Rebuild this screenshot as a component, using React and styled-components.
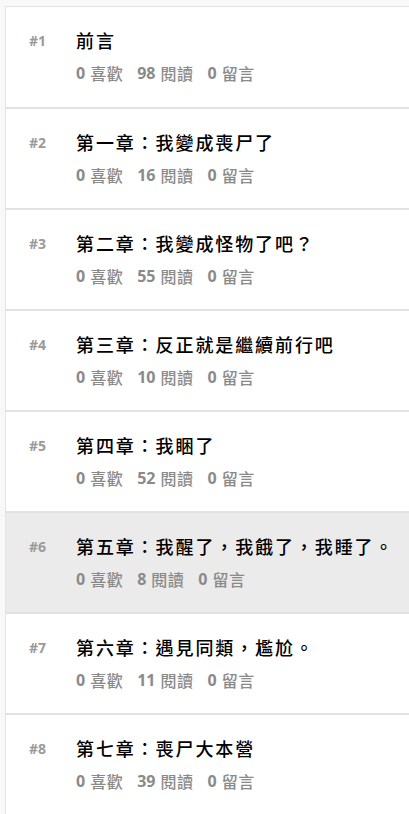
import React from 'react';
import styled, { createGlobalStyle } from 'styled-components';

const GlobalStyle = createGlobalStyle`
  html, body {
    margin: 0;
    padding: 0;
    background: #f8f8f9;
    font-family: "Open Sans", "Noto Sans CJK TC", sans-serif;
    overflow: hidden;
  }
`;

const ChapterList = styled.ul`
  list-style: none;
  margin: 6px 0 0 5px;
  padding: 0;
  background: #fff;
  border-top: 1px solid #e4e4e6;
  border-left: 1px solid #e4e4e6;
`;

const ChapterRow = styled.li`
  display: flex;
  align-items: flex-start;
  height: 99px;
  padding: 0;
  border-bottom: 2px solid #e2e2e2;
  background: ${(props) => (props.active ? '#ebebeb' : '#fff')};

  &:first-child {
    height: 100px;
  }
`;

const Index = styled.div`
  width: 70px;
  flex: none;
  padding: 25px 0 0 23px;
  box-sizing: border-box;
  font-size: 14px;
  font-weight: 700;
  color: #9a9a9a;
  line-height: 18px;
`;

const Body = styled.div`
  display: flex;
  flex-direction: column;
  padding-top: 20px;
  min-width: 0;
`;

const Title = styled.div`
  font-family: "Noto Sans CJK TC", sans-serif;
  font-size: 18px;
  font-weight: 500;
  letter-spacing: 1.9px;
  line-height: 26px;
  color: #000;
  white-space: nowrap;
`;

const Meta = styled.div`
  display: flex;
  gap: 14px;
  margin-top: 10px;
  font-size: 16px;
  font-weight: 700;
  color: #8a8a8a;
  line-height: 20px;
`;

const Stat = styled.span`
  display: flex;
  gap: 5px;
`;

const Label = styled.span`
  font-family: "Noto Sans CJK TC", sans-serif;
  font-size: 16px;
  letter-spacing: 0.5px;
  font-weight: 500;
`;

const chapters = [
  { title: '前言', likes: 0, reads: 98, comments: 0 },
  { title: '第一章：我變成喪尸了', likes: 0, reads: 16, comments: 0 },
  { title: '第二章：我變成怪物了吧？', likes: 0, reads: 55, comments: 0 },
  { title: '第三章：反正就是繼續前行吧', likes: 0, reads: 10, comments: 0 },
  { title: '第四章：我睏了', likes: 0, reads: 52, comments: 0 },
  { title: '第五章：我醒了，我餓了，我睡了。', likes: 0, reads: 8, comments: 0, active: true },
  { title: '第六章：遇見同類，尷尬。', likes: 0, reads: 11, comments: 0 },
  { title: '第七章：喪尸大本營', likes: 0, reads: 39, comments: 0 },
];

const App = () => (
  <>
    <GlobalStyle />
    <ChapterList>
      {chapters.map((ch, i) => (
        <ChapterRow key={i} active={ch.active}>
          <Index>#{i + 1}</Index>
          <Body>
            <Title>{ch.title}</Title>
            <Meta>
              <Stat>{ch.likes}<Label>喜歡</Label></Stat>
              <Stat>{ch.reads}<Label>閱讀</Label></Stat>
              <Stat>{ch.comments}<Label>留言</Label></Stat>
            </Meta>
          </Body>
        </ChapterRow>
      ))}
    </ChapterList>
  </>
);

export default App;
